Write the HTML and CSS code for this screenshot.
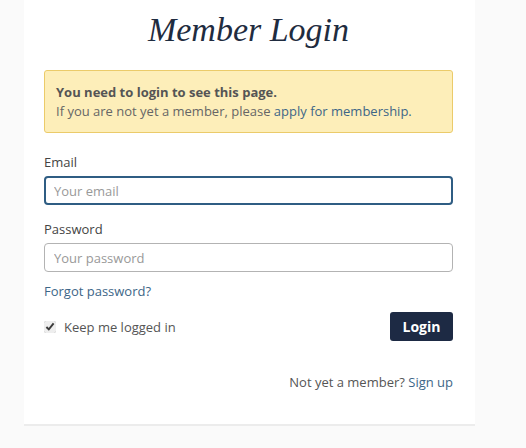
FILE: index.html
```html
<!DOCTYPE html>
<html lang="en">
<head>
  <meta charset="UTF-8" />
  <meta name="viewport" content="width=device-width, initial-scale=1" />
  <title>Member Login</title>
  <link rel="stylesheet" href="styles.css">
</head>
<body>

<main class="panel">
  <h1>Member Login</h1>

  <div class="alert">
    <strong>You need to login to see this page.</strong>
    <div>If you are not yet a member, please <a href="#">apply for membership.</a></div>
  </div>

  <form class="login-form">
    <label for="email">Email</label>
    <input type="email" id="email" class="field focused" placeholder="Your email">

    <label for="password">Password</label>
    <input type="password" id="password" class="field" placeholder="Your password">

    <a href="#" class="forgot">Forgot password?</a>

    <div class="actions">
      <label class="remember">
        <input type="checkbox" checked>
        Keep me logged in
      </label>
      <button type="submit">Login</button>
    </div>
  </form>

  <p class="signup">Not yet a member? <a href="#">Sign up</a></p>
</main>

</body>
</html>
```

FILE: styles.css
```css
body {
  margin: 0;
  padding: 0 0 0 24px;
  background: #fafafa;
  font-family: "Open Sans", sans-serif;
  font-size: 13px;
  color: #555;
}
a {
  color: #3d6687;
  text-decoration: none;
}
.panel {
  width: 409px;
  padding: 1px 22px 20px 20px;
  background: #fff;
  border-bottom: 2px solid #ececec;
  height: 403px;
}
h1 {
  margin: 9px 0 20px;
  text-align: center;
  font-family: "Liberation Serif", serif;
  font-style: italic;
  font-weight: normal;
  font-size: 34px;
  line-height: 40px;
  color: #1f2c40;
}
.alert {
  background: #fdeeb9;
  border: 1px solid #ebcb6a;
  border-radius: 3px;
  padding: 12px 11px 11px;
  line-height: 19px;
  color: #666;
}
.alert strong {
  color: #555;
}
.login-form {
  margin-top: 20px;
  display: flex;
  flex-direction: column;
}
.login-form > label {
  color: #444;
  line-height: 18px;
  margin-bottom: 5px;
}
.field {
  box-sizing: border-box;
  height: 29px;
  margin: 0 0 15px;
  padding: 0 9px;
  border: 1px solid #b3b3b3;
  border-radius: 4px;
  font-family: "Open Sans", sans-serif;
  font-size: 13px;
  color: #555;
}
.field::placeholder {
  color: #999;
}
.field.focused {
  border: 2px solid #2f5d83;
  padding: 0 8px;
}
.forgot {
  line-height: 18px;
  margin-top: -5px;
  align-self: flex-start;
}
.actions {
  margin-top: 12px;
  display: flex;
  justify-content: space-between;
  align-items: center;
}
.remember {
  display: flex;
  align-items: center;
  gap: 8px;
  color: #555;
}
.remember input {
  margin: 0;
  width: 12px;
  height: 12px;
  accent-color: #eee;
}
button {
  background: #1d2a44;
  color: white;
  border: none;
  border-radius: 3px;
  width: 63px;
  height: 29px;
  font-family: "Open Sans", sans-serif;
  font-weight: bold;
  font-size: 14px;
  cursor: pointer;
}
.signup {
  margin: 32px 0 0;
  text-align: right;
  line-height: 18px;
}
```
